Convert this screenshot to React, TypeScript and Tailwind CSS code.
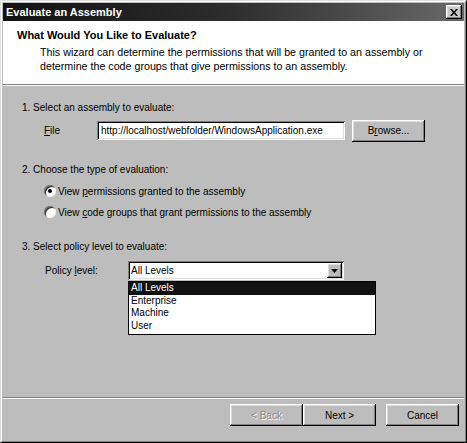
const raised =
  'shadow-[inset_-1px_-1px_0_#000,inset_1px_1px_0_#fff,inset_-2px_-2px_0_#808080,inset_2px_2px_0_#dfdfdf]';
const sunken =
  'shadow-[inset_1px_1px_0_#808080,inset_-1px_-1px_0_#fff,inset_2px_2px_0_#000,inset_-2px_-2px_0_#dfdfdf]';

function Button({ label, disabled, className = '' }: { label: React.ReactNode; disabled?: boolean; className?: string }) {
  return (
    <div
      className={`flex h-[22px] w-[73px] items-center justify-center bg-[#bdbdbd] ${raised} ${
        disabled ? 'text-[#8a8a8a] [text-shadow:1px_1px_0_#fff]' : 'text-black'
      } ${className}`}
    >
      {label}
    </div>
  );
}

function Radio({ checked, children }: { checked?: boolean; children: React.ReactNode }) {
  return (
    <div className="flex h-[14px] items-center">
      <span className="mr-[2px] flex h-[12px] w-[12px] items-center justify-center rounded-full bg-white shadow-[inset_1px_1px_0_#808080,inset_-1px_-1px_0_#efefef,inset_2px_2px_0_#303030]">
        {checked && <span className="h-[4px] w-[4px] rounded-full bg-black" />}
      </span>
      <span>{children}</span>
    </div>
  );
}

export default function App() {
  return (
    <div className="h-[443px] w-[467px] overflow-hidden bg-[#bdbdbd] font-['Liberation_Sans',Arial,sans-serif] text-[10px] leading-[13px] text-black">
      <div className="flex h-full w-full flex-col border-b border-l border-r border-t border-b-black border-l-[#dfdfdf] border-r-black border-t-[#dfdfdf]">
        <div className="flex h-full w-full flex-col border-b border-l border-r border-t border-b-[#808080] border-l-white border-r-[#808080] border-t-white p-px">
          {/* Title bar */}
          <div className="flex h-[18px] shrink-0 items-center justify-between bg-gradient-to-r from-[#121212] via-[#2e2e2e] to-[#6a6a6a] pl-[3px] pr-[2px]">
            <span className="text-[11px] font-bold text-white">Evaluate an Assembly</span>
            <div className={`flex h-[14px] w-[16px] items-center justify-center bg-[#c8c8c8] ${raised}`}>
              <svg width="8" height="7" viewBox="0 0 8 7">
                <path d="M0 0h2l2 2.5L6 0h2L5 3.5 8 7H6L4 4.5 2 7H0l3-3.5z" fill="#000" />
              </svg>
            </div>
          </div>

          {/* Header */}
          <div className="h-[63px] shrink-0 bg-white pl-[14px] pt-[7px]">
            <div className="text-[11px] font-bold leading-[14px]">What Would You Like to Evaluate?</div>
            <div className="mt-[3px] pl-[23px] text-[10.7px] leading-[14px]">
              <div>This wizard can determine the permissions that will be granted to an assembly or</div>
              <div>determine the code groups that give permissions to an assembly.</div>
            </div>
          </div>
          <div className="h-px shrink-0 bg-[#808080]" />
          <div className="h-px shrink-0 bg-white" />

          {/* Body */}
          <div className="relative flex-1 pl-[19px]">
            <div className="mt-[15px]">1. Select an assembly to evaluate:</div>
            <div className="mt-[6px] flex h-[21px] items-center">
              <span className="w-[75px] pl-[22px]">
                <u>F</u>ile
              </span>
              <div className={`flex h-[19px] w-[248px] items-center bg-white pl-[4px] ${sunken}`}>
                http://localhost/webfolder/WindowsApplication.exe
              </div>
              <Button
                className="ml-[7px] h-[21px]"
                label={
                  <span>
                    B<u>r</u>owse...
                  </span>
                }
              />
            </div>

            <div className="mt-[22px]">2. Choose the type of evaluation:</div>
            <div className="mt-[8px] space-y-[7px] pl-[22px]">
              <Radio checked>
                View <u>p</u>ermissions granted to the assembly
              </Radio>
              <Radio>
                View <u>c</u>ode groups that grant permissions to the assembly
              </Radio>
            </div>

            <div className="mt-[21px]">3. Select policy level to evaluate:</div>
            <div className="mt-[8px] flex h-[19px] items-center">
              <span className="w-[106px] pl-[23px]">
                Policy <u>l</u>evel:
              </span>
              <div className={`relative flex h-[19px] w-[216px] items-center bg-white pl-[3px] ${sunken}`}>
                All Levels
                <div className={`absolute right-[2px] top-[2px] flex h-[15px] w-[15px] items-center justify-center bg-[#bdbdbd] ${raised}`}>
                  <svg width="7" height="4" viewBox="0 0 7 4">
                    <path d="M0 0h7L3.5 4z" fill="#000" />
                  </svg>
                </div>
                {/* Open list */}
                <div className="absolute left-0 top-[20px] z-10 w-[248px] border border-black bg-white leading-[12.7px]">
                  <div className="bg-[#111] pl-[2px] text-white">All Levels</div>
                  <div className="pl-[2px]">Enterprise</div>
                  <div className="pl-[2px]">Machine</div>
                  <div className="pb-[1px] pl-[2px]">User</div>
                </div>
              </div>
            </div>
          </div>

          {/* Footer */}
          <div className="h-px shrink-0 bg-[#808080]" />
          <div className="h-px shrink-0 bg-white" />
          <div className="flex h-[41px] shrink-0 justify-end pr-[5px] pt-[5px]">
            <Button disabled label="< Back" />
            <Button label="Next >" />
            <Button className="ml-[10px]" label="Cancel" />
          </div>
        </div>
      </div>
    </div>
  );
}
